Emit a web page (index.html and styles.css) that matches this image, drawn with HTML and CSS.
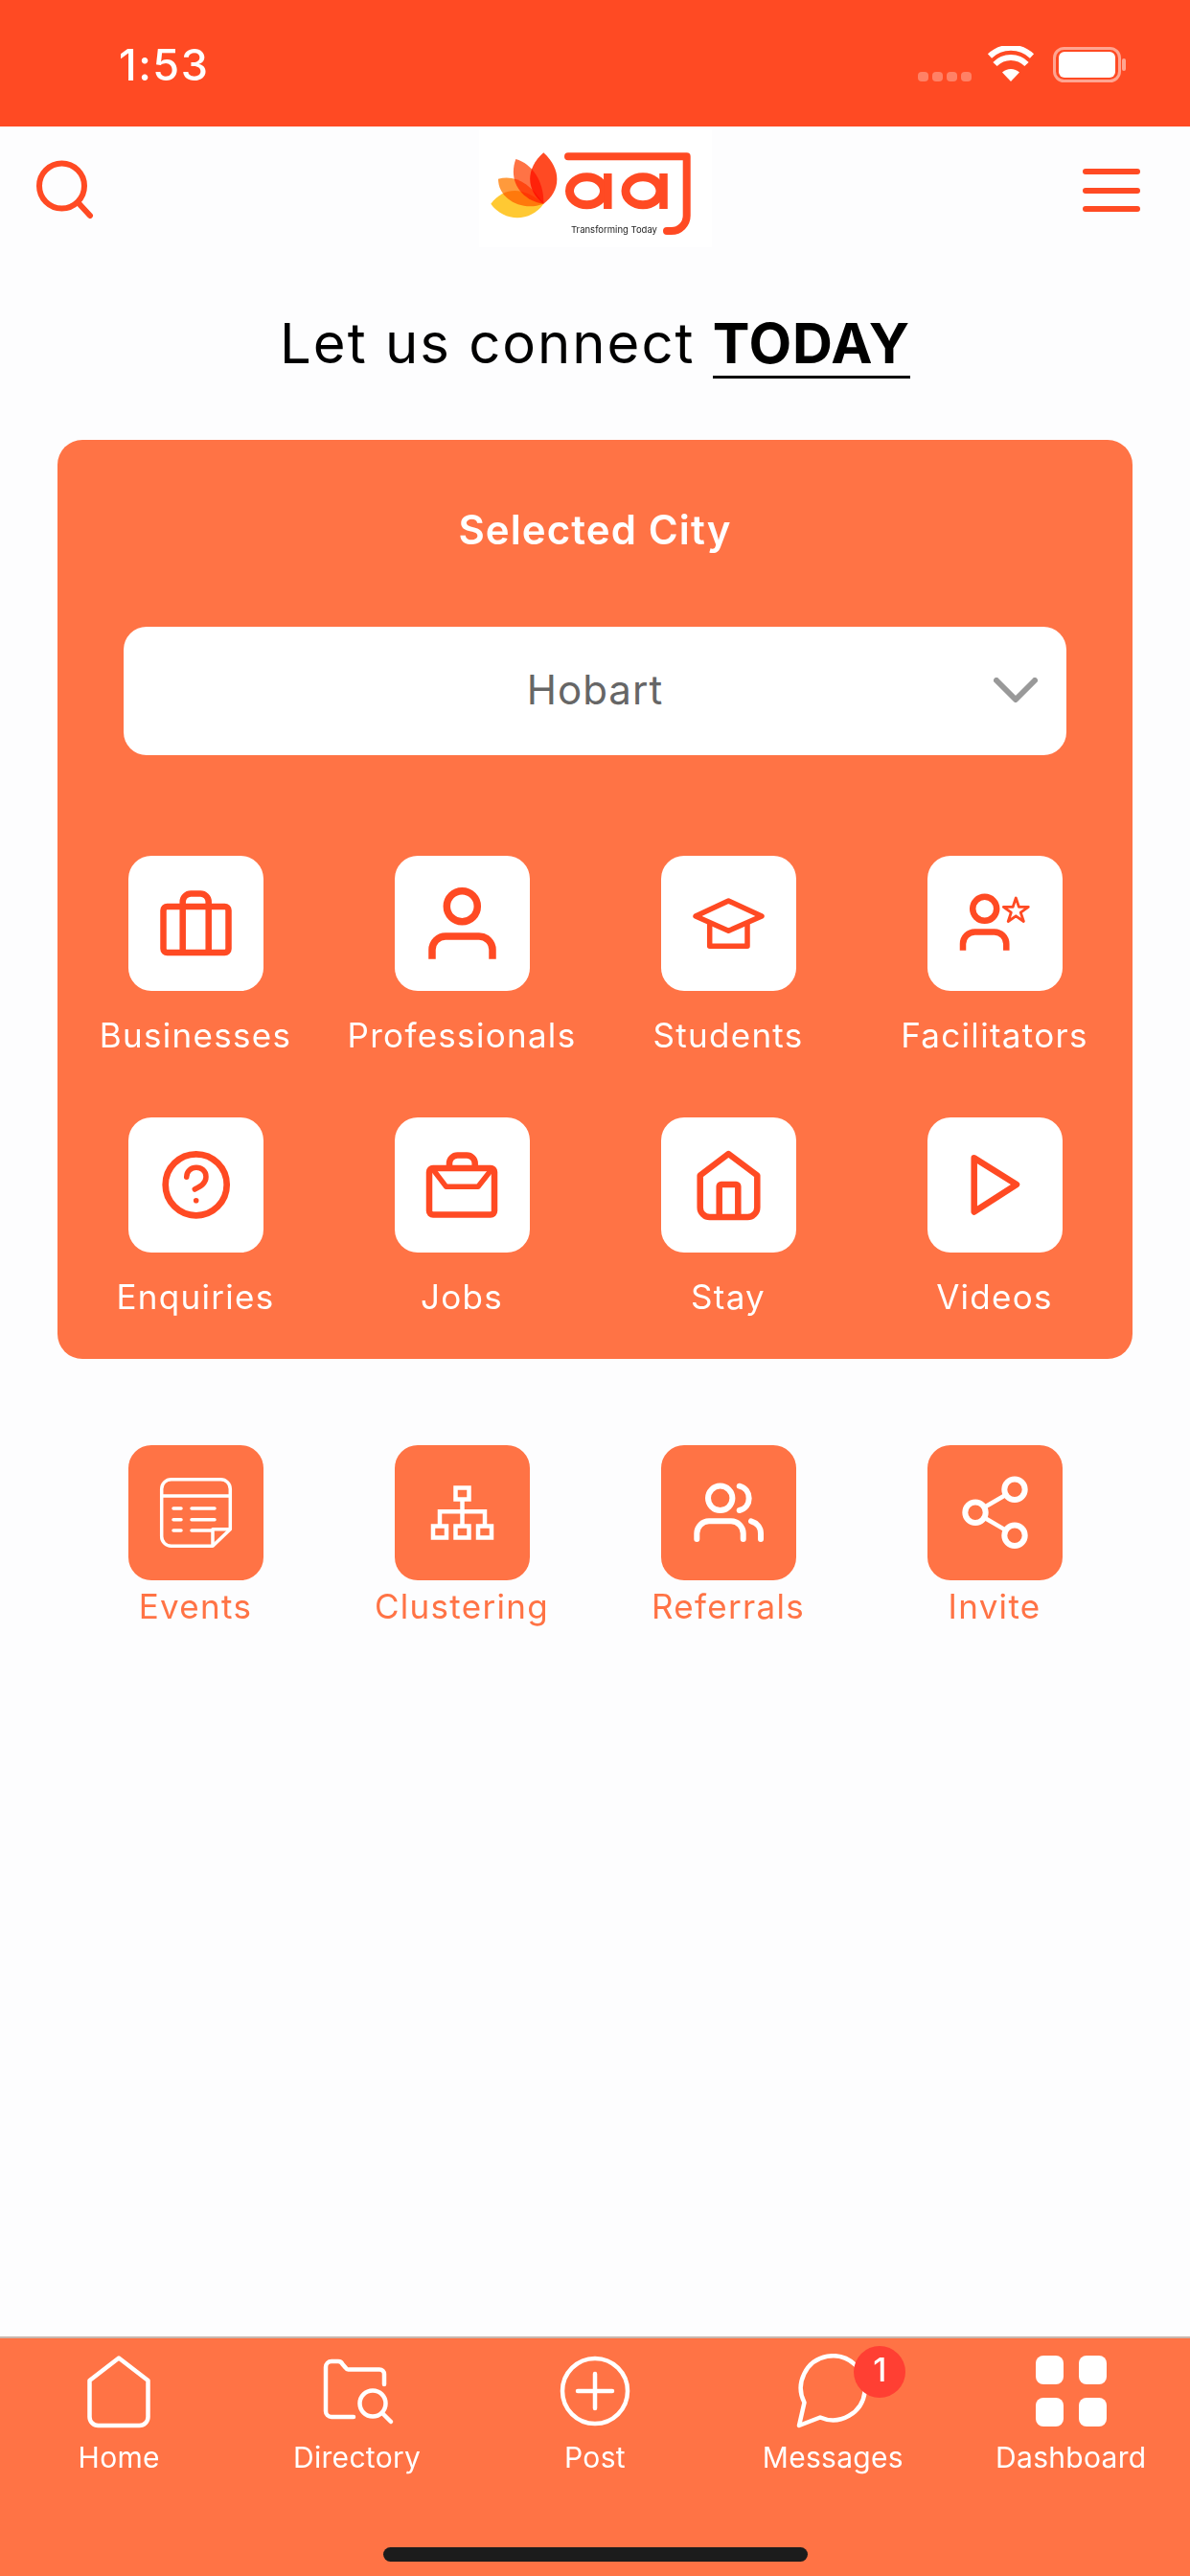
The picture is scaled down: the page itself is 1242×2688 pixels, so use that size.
FILE: index.html
```html
<!DOCTYPE html>
<html lang="en">
<head>
<meta charset="utf-8">
<title>aaj</title>
<link rel="stylesheet" href="styles.css">
</head>
<body>
<div class="screen">
  <div class="status">
    <span class="time">1:53</span>
    <svg class="status-icons" viewBox="0 0 218 40" width="218" height="40">
      <g fill="#fff" opacity=".3">
        <rect x="0" y="27" width="11" height="10" rx="4"/><rect x="15" y="27" width="11" height="10" rx="4"/><rect x="30" y="27" width="11" height="10" rx="4"/><rect x="45" y="27" width="11" height="10" rx="4"/>
      </g>
      <path d="M97 37 L88 27.5 A13 13 0 0 1 106 27.5Z" fill="#fff"/>
      <path d="M80.5 19 A23 23 0 0 1 113.500 19" fill="none" stroke="#fff" stroke-width="6"/>
      <path d="M75 10.500 A32 32 0 0 1 119 10.500" fill="none" stroke="#fff" stroke-width="6"/>
      <rect x="142.500" y="2.500" width="68" height="34" rx="10" fill="none" stroke="#fff" stroke-opacity=".5" stroke-width="3"/>
      <rect x="147" y="6" width="59" height="27" rx="6" fill="#fff"/>
      <rect x="213" y="13" width="4" height="13" rx="2" fill="#fff" opacity=".5"/>
    </svg>
  </div>

  <header class="topbar">
    <svg class="head-icon" viewBox="0 0 60 62" width="60" height="62">
      <circle cx="26.500" cy="27" r="23.500" fill="none" stroke="#ff4a23" stroke-width="6"/>
      <path d="M44 45 L56 58" fill="none" stroke="#ff4a23" stroke-width="6" stroke-linecap="round"/>
    </svg>
    <div class="logo">
      <svg viewBox="0 0 243 123" width="243" height="123" role="img" aria-label="aaj logo">
        <g class="petals">
          <path fill="#ffc933" d="M67.300 77.700 C50 62 28 57 12.300 77.700 C26 97 54 97 67.300 77.700Z"/>
          <path fill="#ff9a3c" d="M67.300 77.700 C54 57 38 47 20 51.700 C20 73 45 86 67.300 77.700Z"/>
          <path fill="#ff7345" d="M67.300 77.700 C68 55 56 36 38.300 31 C30 54 44 74 67.300 77.700Z"/>
          <path fill="#ff4a23" d="M67.300 77.700 C50 65 47 42 67.300 24.300 C87 42 85 65 67.300 77.700Z"/>
        </g>
        <g fill="none" stroke="#ff4a23">
          <ellipse cx="112.500" cy="64.300" rx="18" ry="14.500" stroke-width="9"/>
          <ellipse cx="171" cy="64.300" rx="18" ry="14.500" stroke-width="9"/>
          <path d="M134.300 46 V83 M192.500 46 V83" stroke-width="8.500"/>
          <path d="M93 28.300 H216.700 V90 a16 16 0 0 1 -16 16 H196" stroke-width="8" stroke-linejoin="round" stroke-linecap="round"/>
        </g>
        <text class="logo-tag" x="96" y="108">Transforming Today</text>
      </svg>
    </div>
    <div class="burger"><i></i><i></i><i></i></div>
  </header>

  <h1 class="headline">Let us connect <strong>TODAY</strong></h1>

  <section class="card">
    <h2 class="card-title">Selected City</h2>
    <div class="select">
      <span>Hobart</span>
      <svg class="chevron" viewBox="0 0 46 26" width="46" height="26"><path d="M3 3 L23 23 L43 3" fill="none" stroke="#999" stroke-width="6" stroke-linecap="round" stroke-linejoin="round"/></svg>
    </div>
    <div class="grid">
      <div class="cell">
        <div class="tile"><svg class="ic" viewBox="0 0 141 141" stroke-width="6.500"><rect x="36.500" y="53" width="68" height="48" rx="4"/><path d="M56.700 53 V101 M83.700 53 V101 M56.700 53 V48 a8.500 8.500 0 0 1 8.500 -8.500 H75.200 a8.500 8.500 0 0 1 8.500 8.500 V53"/></svg></div>
        <span class="label">Businesses</span>
      </div>
      <div class="cell">
        <div class="tile"><svg class="ic" viewBox="0 0 141 141" stroke-width="7.500"><circle cx="70.300" cy="52.700" r="16"/><path d="M39 107.700 V98 a14 14 0 0 1 14 -14 H88 a14 14 0 0 1 14 14 V107.700"/></svg></div>
        <span class="label">Professionals</span>
      </div>
      <div class="cell">
        <div class="tile"><svg class="ic" viewBox="0 0 141 141" stroke-width="5.500"><path d="M36 63 L70.300 47 L105 63 L70.300 78.300Z"/><path d="M50.700 71 V94.300 H90 V71"/></svg></div>
        <span class="label">Students</span>
      </div>
      <div class="cell">
        <div class="tile"><svg class="ic" viewBox="0 0 141 141" stroke-width="6.500"><circle cx="59.700" cy="55.300" r="12.500"/><path d="M37 98.700 V92 a12.500 12.500 0 0 1 12.500 -12.500 H69.800 a12.500 12.500 0 0 1 12.500 12.500 V98.700"/><path stroke-width="2.800" d="M92.300 44 L95.400 53.300 L105.300 53.300 L97.300 59.200 L100.400 68.500 L92.300 62.800 L84.200 68.500 L87.300 59.200 L79.300 53.300 L89.200 53.300Z"/></svg></div>
        <span class="label">Facilitators</span>
      </div>
      <div class="cell">
        <div class="tile"><svg class="ic" viewBox="0 0 141 141" stroke-width="6.700"><circle cx="70.700" cy="70.300" r="32"/><path stroke-width="5.500" stroke-linecap="round" d="M60.700 62.300 C60.700 49 81 49 81 62 C81 69 75 72 69.300 75"/><circle class="solid" cx="70.700" cy="86.700" r="2.800"/></svg></div>
        <span class="label">Enquiries</span>
      </div>
      <div class="cell">
        <div class="tile"><svg class="ic" viewBox="0 0 141 141" stroke-width="6.500"><rect x="36" y="53" width="68" height="48.500" rx="4"/><path d="M57 53 V48 a8.500 8.500 0 0 1 8.500 -8.500 H75.200 a8.500 8.500 0 0 1 8.500 8.500 V53"/><path stroke-width="5.500" d="M39.700 54 L53.700 72.300 H87 L101.300 54"/></svg></div>
        <span class="label">Jobs</span>
      </div>
      <div class="cell">
        <div class="tile"><svg class="ic" viewBox="0 0 141 141" stroke-width="6.500"><path d="M70.300 38 L40.700 60.500 V94 a10 10 0 0 0 10 10 H90.300 a10 10 0 0 0 10 -10 V60.500Z"/><path d="M60.700 104 V72 a2 2 0 0 1 2 -2 H78.300 a2 2 0 0 1 2 2 V104"/></svg></div>
        <span class="label">Stay</span>
      </div>
      <div class="cell">
        <div class="tile"><svg class="ic" viewBox="0 0 141 141" stroke-width="6.500"><path d="M48.700 42.300 L93 70 L48.700 98.500Z"/></svg></div>
        <span class="label">Videos</span>
      </div>
    </div>
  </section>

  <section class="extras">
    <div class="cell">
      <div class="tile alt"><svg class="ic" viewBox="0 0 141 141" stroke-width="3.500"><path d="M88 105.300 H44.700 a10 10 0 0 1 -10 -10 V45.700 a10 10 0 0 1 10 -10 H96.300 a10 10 0 0 1 10 10 V87.700Z"/><path d="M34.700 53 H106.300 M88 105.300 V87.700 H106.300"/><path stroke-linecap="round" d="M47 66 H55 M66 66 H90 M47 77.700 H55 M66 77.700 H90 M47 89 H55 M66 89 H87"/></svg></div>
      <span class="label alt-label">Events</span>
    </div>
    <div class="cell">
      <div class="tile alt"><svg class="ic square" viewBox="0 0 141 141" stroke-width="4.500"><rect x="63.500" y="44.500" width="14" height="12"/><rect x="40" y="84.500" width="14" height="12"/><rect x="63.500" y="84.500" width="14" height="12"/><rect x="87" y="84.500" width="14" height="12"/><path d="M70.500 56.500 V84.500 M47 84.500 V69.300 H94 V84.500"/></svg></div>
      <span class="label alt-label">Clustering</span>
    </div>
    <div class="cell">
      <div class="tile alt"><svg class="ic" viewBox="0 0 141 141" stroke-width="6"><circle cx="61.700" cy="55.300" r="12.700"/><path stroke-linecap="round" d="M81.700 42.700 C95 46 95 65 81.700 68 M37.300 98 V92 a12.700 12.700 0 0 1 12.700 -12.700 H73 a12.700 12.700 0 0 1 12.700 12.700 V98 M94 79.300 C100 81 104 86 104 92 V98"/></svg></div>
      <span class="label alt-label">Referrals</span>
    </div>
    <div class="cell">
      <div class="tile alt"><svg class="ic" viewBox="0 0 141 141" stroke-width="6"><circle cx="91" cy="46.300" r="10.700"/><circle cx="50" cy="70.300" r="10.700"/><circle cx="91" cy="94.300" r="10.700"/><path stroke-width="4.500" d="M59.500 64.800 L81.500 52 M59.500 75.800 L81.500 88.600"/></svg></div>
      <span class="label alt-label">Invite</span>
    </div>
  </section>

  <nav class="nav">
    <div class="nav-row">
      <div class="nav-item">
        <svg class="nav-ic" viewBox="0 0 100 80"><path d="M50 4.500 L19.500 28 V66 a9 9 0 0 0 9 9 H71.500 a9 9 0 0 0 9 -9 V28Z"/></svg>
        <span class="nav-label">Home</span>
      </div>
      <div class="nav-item">
        <svg class="nav-ic" viewBox="0 0 100 80"><path d="M46 66 H23 a6 6 0 0 1 -6 -6 V14 a6 6 0 0 1 6 -6 H30 a5 5 0 0 1 4.500 3 L38 15 a3 3 0 0 0 2.500 1.500 H73 a5 5 0 0 1 5 5 V32"/><circle cx="66" cy="52" r="13.500"/><path d="M76 62 L85 71"/></svg>
        <span class="nav-label">Directory</span>
      </div>
      <div class="nav-item">
        <svg class="nav-ic" viewBox="0 0 100 80"><circle cx="50" cy="39" r="34"/><path d="M32 39 H68 M50 21 V57"/></svg>
        <span class="nav-label">Post</span>
      </div>
      <div class="nav-item">
        <svg class="nav-ic" viewBox="0 0 100 80"><path d="M20.500 51 A33.500 33.500 0 1 1 37 66.500 L15 75Z"/></svg>
        <span class="nav-label">Messages</span>
        <span class="badge">1</span>
      </div>
      <div class="nav-item">
        <div class="dash"><i></i><i></i><i></i><i></i></div>
        <span class="nav-label">Dashboard</span>
      </div>
    </div>
    <div class="home-bar"></div>
  </nav>
</div>
</body>
</html>
```
FILE: styles.css
```css
* { box-sizing: border-box; }
html, body { margin: 0; padding: 0; }
body { font-family: Inter, "Liberation Sans", sans-serif; background: #fdfdfe; }
.screen { width: 1242px; height: 2688px; display: flex; flex-direction: column; overflow: hidden; background: #fdfdfe; }

.status { height: 132px; flex: none; background: #ff4a23; display: flex; justify-content: space-between; align-items: flex-start; padding: 48px 66px 0 124px; }
.time { color: #fff; font-size: 45px; font-weight: 500; line-height: 40px; letter-spacing: 1.5px; }
.status-icons { display: block; }

.topbar { height: 128px; flex: none; display: grid; grid-template-columns: 462px 243px 1fr; align-items: start; padding-left: 38px; }
.head-icon { display: block; margin-top: 35px; }
.logo { background: #fff; height: 123px; margin-top: 3px; }
.logo svg { display: block; }
.petals path { mix-blend-mode: multiply; }
.logo-tag { font-family: Inter, sans-serif; font-size: 9.500px; fill: #222; }
.burger { justify-self: end; margin: 44px 52px 0 0; width: 60px; display: flex; flex-direction: column; gap: 13.500px; }
.burger i { display: block; height: 6px; border-radius: 3px; background: #ff4a23; }

.headline { margin: 0; flex: none; height: 199px; padding-top: 64px; text-align: center; font-size: 58px; line-height: 68px; font-weight: 400; color: #000; letter-spacing: 2px; }
.headline strong { font-weight: 700; display: inline-block; line-height: 58px; padding-bottom: 5px; border-bottom: 3px solid #000; letter-spacing: 0.8px; }

.card { flex: none; margin: 0 60px; height: 959px; border-radius: 26px; background: #ff7345; padding: 68px 5px 0; }
.card-title { margin: 0; text-align: center; color: #fff; font-size: 42px; line-height: 52px; font-weight: 600; letter-spacing: 1.1px; }
.select { margin: 75px 64px 0; height: 134px; border-radius: 24px; background: #fff; position: relative; display: flex; align-items: center; justify-content: center; padding-bottom: 3px; color: #666; font-size: 42px; letter-spacing: 1px; }
.chevron { position: absolute; right: 30px; top: 53px; }

.grid { display: grid; grid-template-columns: repeat(4, 278px); row-gap: 0; margin-top: 105px; }
.cell { display: flex; flex-direction: column; align-items: center; }
.grid .cell { height: 273px; }
.tile { width: 141px; height: 141px; flex: none; border-radius: 24px; background: #fff; color: #ff4a23; }
.tile.alt { background: #ff7345; color: #fff; }
.ic { display: block; width: 141px; height: 141px; fill: none; stroke: currentColor; stroke-linejoin: round; }
.ic.square { stroke-linejoin: miter; }
.ic .solid { fill: currentColor; stroke: none; }
.label { margin-top: 23px; color: #fff; font-size: 35px; line-height: 46px; white-space: nowrap; letter-spacing: 1.3px; }
.alt-label { color: #ff7345; margin-top: 4px; }

.extras { flex: none; margin-top: 90px; padding: 0 65px; display: grid; grid-template-columns: repeat(4, 278px); }

.nav { margin-top: auto; height: 250px; flex: none; background: #ff7345; border-top: 2px solid #c9b6ad; display: flex; flex-direction: column; }
.nav-row { display: grid; grid-template-columns: repeat(5, 1fr); padding-top: 16px; }
.nav-item { position: relative; display: flex; flex-direction: column; align-items: center; }
.nav-ic { display: block; width: 100px; height: 80px; fill: none; stroke: #fff; stroke-width: 4.500px; stroke-linejoin: round; stroke-linecap: round; }
.nav-label { color: #fff; font-size: 30px; line-height: 36px; margin-top: 10px; white-space: nowrap; letter-spacing: 0.3px; }
.badge { position: absolute; left: 146px; top: -8px; width: 54px; height: 54px; border-radius: 50%; background: #ff3f33; color: #fff; font-size: 34px; line-height: 50px; font-weight: 500; text-align: center; }
.dash { width: 74px; height: 74px; margin: 2px 13px 4px; display: grid; grid-template-columns: 29px 29px; grid-template-rows: 30px 30px; justify-content: space-between; align-content: space-between; }
.dash i { display: block; background: #fff; border-radius: 8px; }
.home-bar { width: 443px; height: 15px; border-radius: 8px; background: #1c1c1c; margin: 76px auto 0; }
```
